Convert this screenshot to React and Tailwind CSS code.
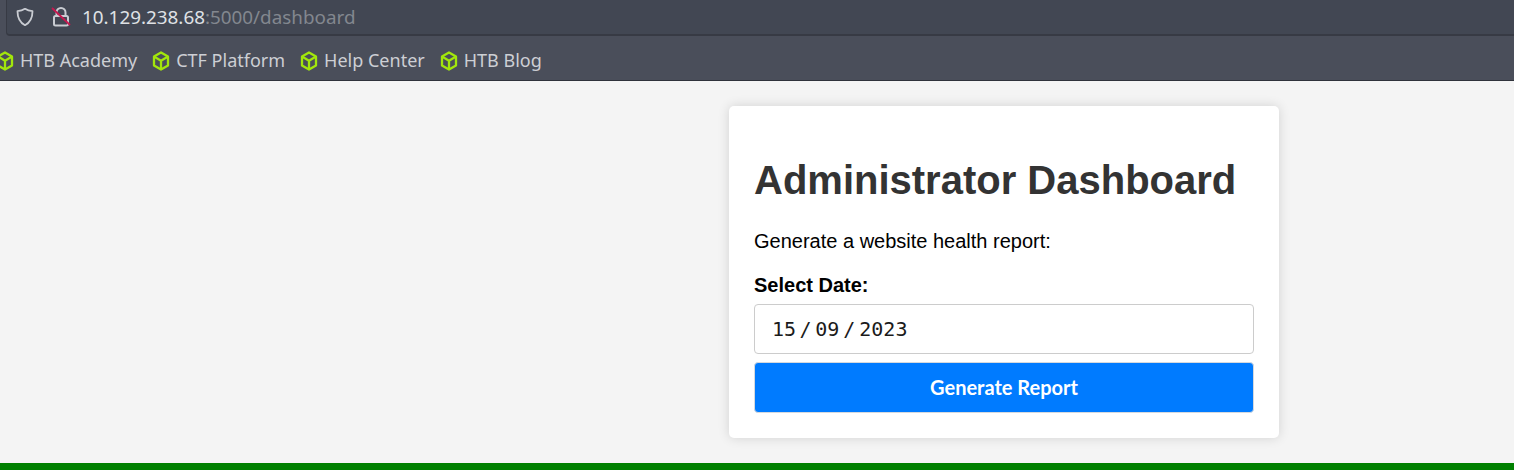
import React from "react";

function Cube() {
  return (
    <svg width="18" height="20" viewBox="0 0 18 20" fill="none" stroke="#a2e60c" strokeWidth="2.300" strokeLinejoin="round" className="shrink-0">
      <path d="M9 1.500l7 4v9l-7 4-7-4v-9z" />
      <path d="M2 5.500l7 4.200 7-4.200M9 9.700v8.800" />
    </svg>
  );
}

function Bookmark({ label }) {
  return (
    <div className="flex items-center gap-[6px]">
      <Cube />
      <span>{label}</span>
    </div>
  );
}

export default function App() {
  return (
    <div className="flex h-[470px] w-[1514px] flex-col overflow-hidden bg-[#f4f4f4] font-['Liberation_Sans',sans-serif]">
      <div className="h-[81px] shrink-0 border-b border-b-[#2f323b] bg-[#4a4e5a] font-['Noto_Sans',sans-serif]">
        <div className="ml-[6px] flex h-[36px] items-center rounded-bl-[4px] border-b-2 border-l border-[#373a44] bg-[#424753] pl-[8px]">
          <svg width="20" height="20" viewBox="0 0 20 20" fill="none" stroke="#c9ccd2" strokeWidth="1.800" strokeLinejoin="round">
            <path d="M10 1.800c2.300 1.500 4.700 2.200 7.500 2.400 0 6.500-2.400 11.300-7.500 14-5.100-2.700-7.500-7.500-7.500-14 2.800-.2 5.200-.9 7.500-2.400z" />
          </svg>
          <svg width="20" height="22" viewBox="0 0 20 22" fill="none" className="ml-[16px]">
            <path d="M5.500 10V6.500a4.500 4.500 0 019 0V10" stroke="#c9ccd2" strokeWidth="2" />
            <rect x="3" y="10" width="14" height="9.500" rx="1.500" stroke="#c9ccd2" strokeWidth="2" />
            <path d="M1 2l18 17" stroke="#c8174f" strokeWidth="1.800" />
          </svg>
          <div className="ml-[11px] text-[18.850px] leading-none text-[#dfe1e5]">
            10.129.238.68<span className="text-[#83878f]">:5000/dashboard</span>
          </div>
        </div>
        <div className="-ml-[4px] flex h-[44px] items-center gap-[15px] pt-[5px] text-[18px] text-[#cdcfd4]">
          <Bookmark label="HTB Academy" />
          <Bookmark label="CTF Platform" />
          <Bookmark label="Help Center" />
          <Bookmark label="HTB Blog" />
        </div>
      </div>

      <div className="flex-1 pl-[729px] pt-[25px]">
        <div className="h-[332px] w-[550px] rounded-[5px] bg-white px-[25px] pt-[51px] shadow-[0_0_12px_rgba(0,0,0,0.14)]">
          <h1 className="text-[40px] leading-[46px] font-bold text-[#333333]">Administrator Dashboard</h1>
          <p className="mt-[27px] text-[20px] leading-[23px] text-black">Generate a website health report:</p>
          <label className="mt-[21px] block text-[20px] leading-[23px] font-bold text-black">Select Date:</label>
          <div className="mt-[7px] flex h-[50px] items-center rounded-[4px] border border-[#cccccc] bg-white pl-[17px] font-['DejaVu_Sans_Mono',monospace] text-[20px] text-[#1b1b1b]">
            <span>15</span>
            <span className="mx-[3.500px]">/</span>
            <span>09</span>
            <span className="mx-[4px]">/</span>
            <span>2023</span>
          </div>
          <button className="mt-[8px] block h-[51px] w-full rounded-[4px] border border-[#d5d9de] bg-[#007bff] pb-[1px] font-['Lato',sans-serif] text-[20px] font-bold text-white">
            Generate Report
          </button>
        </div>
      </div>

      <div className="h-[7px] shrink-0 bg-[#008000]" />
    </div>
  );
}
